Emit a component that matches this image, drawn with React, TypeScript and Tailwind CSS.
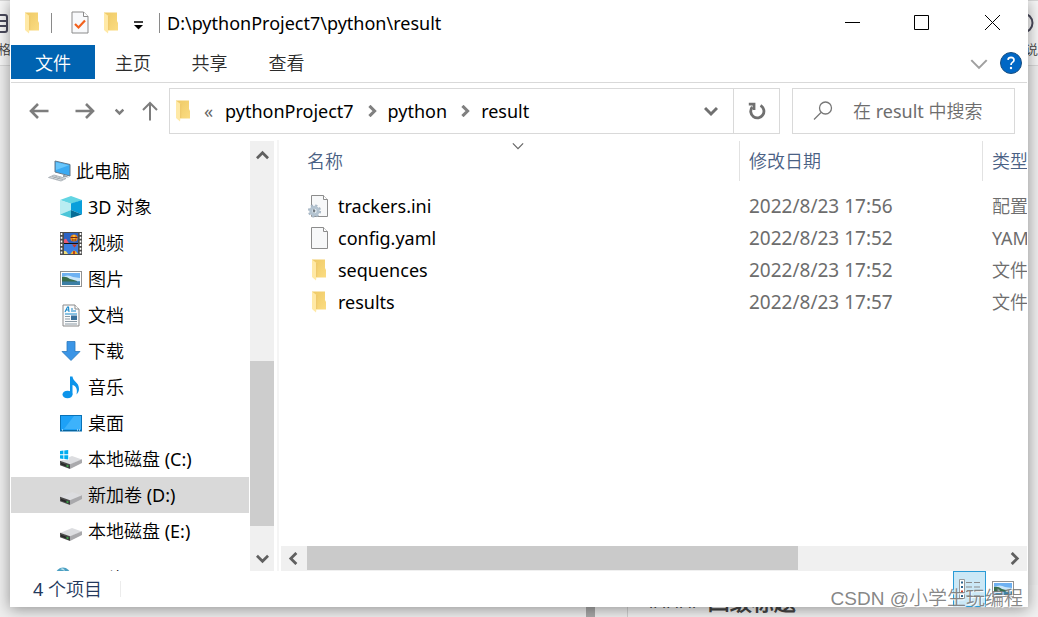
import React from "react";

type IconProps = { className?: string };

function FolderIcon({ className = "" }: IconProps) {
  return (
    <svg className={className} width="14" height="22" viewBox="0 0 14 22" aria-hidden="true">
      <defs>
        <linearGradient id="folderBack" x1="0" x2="1" y1="0" y2="1">
          <stop offset="0" stopColor="#eec965" />
          <stop offset="1" stopColor="#fbdc82" />
        </linearGradient>
      </defs>
      <path d="M0 0.5H13V9L14 11V18.5H2Z" fill="url(#folderBack)" />
      <path d="M0 0.5L4.5 4V17.5L4 21.5L0 18Z" fill="#ffe9a6" />
      <path d="M4.6 4V18" stroke="#e9bf5c" strokeWidth="0.7" />
    </svg>
  );
}

function CheckPageIcon() {
  return (
    <svg width="18" height="23" viewBox="0 0 18 23" aria-hidden="true">
      <path d="M1 1H12.5L17 5.5V22H1Z" fill="#f8f9fb" stroke="#8b8b8b" />
      <path d="M12.5 1V5.5H17" fill="#fff" stroke="#8b8b8b" />
      <path d="M4 13L7.5 16.5L14 9.5" fill="none" stroke="#f2611c" strokeWidth="2.2" />
    </svg>
  );
}

function PageIcon({ gear = false }: { gear?: boolean }) {
  return (
    <svg width="22" height="24" viewBox="0 0 22 24" aria-hidden="true">
      <path d="M3.5 1.5H15.5L19.5 5.5V22.5H3.5Z" fill="#f7f8f9" stroke="#8c8c8c" />
      <path d="M15.5 1.5V5.5H19.5" fill="#fff" stroke="#8c8c8c" />
      {gear && (
        <g>
          <circle cx="6.5" cy="17" r="5.4" fill="none" stroke="#a9b8c6" strokeWidth="2.4" strokeDasharray="2.2 2.04" />
          <circle cx="6.5" cy="17" r="3.7" fill="#e4edf4" stroke="#b3c3d0" strokeWidth="3" />
          <path d="M5 15.5Q7 14.5 7.5 17L6 19Q4.5 17.5 5 15.5Z" fill="#6f7880" />
        </g>
      )}
    </svg>
  );
}

function ComputerIcon() {
  return (
    <svg width="24" height="22" viewBox="0 0 24 22" aria-hidden="true">
      <path d="M7 1L22 4.5V16L7 12Z" fill="#3baaf2" stroke="#66798a" strokeWidth="1" />
      <path d="M8 2.2L21 5.3L8 10Z" fill="#69c6fb" />
      <path d="M15 14.5L18 15.5L21 17.5L15 17Z" fill="#9ca5ad" />
      <path d="M6 15L18 18.5L13 21L0.5 17.5Z" fill="#d5d9dc" stroke="#a2aab0" strokeWidth="0.8" />
      <path d="M4 16.5L15 19.5M9 16L5 18.7M12.5 17L8.5 19.7" stroke="#8f989f" strokeWidth="0.6" />
    </svg>
  );
}

function CubeIcon() {
  return (
    <svg width="22" height="22" viewBox="0 0 22 22" aria-hidden="true">
      <path d="M0 4L11 0L22 4L11 8Z" fill="#63d5e3" />
      <path d="M0 4L11 7.5V14L0 18.5Z" fill="#b9edf2" />
      <path d="M22 4L11 7.5V14L22 18.5Z" fill="#0a9fdb" />
      <path d="M0 18.5L11 14V22Z" fill="#4ac5d8" />
      <path d="M22 18.5L11 14V22Z" fill="#066d96" />
    </svg>
  );
}

function VideoIcon() {
  return (
    <svg width="22" height="23" viewBox="0 0 22 23" aria-hidden="true">
      <rect width="22" height="23" fill="#4c4c4c" />
      <rect x="4" y="1" width="14" height="10" fill="#2b62c4" />
      <rect x="4" y="12" width="14" height="10" fill="#3d7ee0" />
      <path d="M1.5 1V23M20.5 1V23" stroke="#fff" strokeWidth="1.6" strokeDasharray="2 1.7" />
      <path d="M4 8Q6 5 7.5 9L9 11H4Z" fill="#e55a75" />
      <circle cx="14" cy="6" r="3.6" fill="#e8841f" />
      <path d="M13.3 3H14.7V9H13.3Z" fill="#ffd137" />
      <path d="M10.5 5.5H17.5M12 8H16" stroke="#702818" />
      <path d="M12 12.5H17L14.5 15.5Z" fill="#ce3824" />
      <path d="M10.5 22Q14 15 18 22Z" fill="#efb82b" />
      <path d="M13 22V19H15V22Z" fill="#c24019" />
      <path d="M4 19Q6 18 8 22H4Z" fill="#eddc78" />
      <path d="M4 11.5H18" stroke="#111" />
    </svg>
  );
}

function PictureIcon() {
  return (
    <svg width="22" height="16" viewBox="0 0 22 16" aria-hidden="true">
      <rect x="0.5" y="0.5" width="21" height="15" fill="#fff" stroke="#929292" />
      <rect x="2" y="2" width="18" height="12" fill="#6eb1f2" />
      <path d="M2 6Q8 3 13 6L20 7V10H2Z" fill="#c9e6fa" />
      <path d="M2 6Q6 5 10 8Q14 9 17 10V11H2Z" fill="#386d4c" />
      <path d="M2 10.5H20V14H2Z" fill="#3c7fa6" />
    </svg>
  );
}

function DocumentIcon() {
  return (
    <svg width="18" height="23" viewBox="0 0 18 23" aria-hidden="true">
      <path d="M1 1H13L17 5V22H1Z" fill="#fafbfc" stroke="#8b8b8b" />
      <path d="M13 1V5H17" fill="#fff" stroke="#8b8b8b" />
      <path d="M3 8L5.5 3H6.5L7 8M4 6H7M9 5H11M9 7H14" fill="none" stroke="#1688c9" strokeWidth="1.1" />
      <path d="M3 10H15" stroke="#1688c9" />
      <path d="M3 12.5H8M3 15H8M3 17.5H15M3 20H15" stroke="#8d9ba5" />
      <rect x="9" y="11.5" width="6" height="4.5" fill="#38709b" />
    </svg>
  );
}

function DownloadIcon() {
  return (
    <svg width="20" height="20" viewBox="0 0 20 20" aria-hidden="true">
      <path d="M6 0.5H14V10.5H19L10 19.5L1 10.5H6Z" fill="#3b95e6" stroke="#2b78bd" strokeWidth="0.8" />
    </svg>
  );
}

function MusicIcon() {
  return (
    <svg width="18" height="23" viewBox="0 0 18 23" aria-hidden="true">
      <ellipse cx="5.5" cy="18.5" rx="5" ry="3.8" fill="#0d94ea" />
      <path d="M8 0.5H10.5C11 6 17 6 17 13C17 15 16 17 14.5 18.5C16 12 13 9.5 10.5 9V18.5H8Z" fill="#0d94ea" />
    </svg>
  );
}

function DesktopIcon() {
  return (
    <svg width="22" height="17" viewBox="0 0 22 17" aria-hidden="true">
      <rect x="0.5" y="0.5" width="21" height="15.5" fill="#1da1f7" stroke="#0872b8" />
      <path d="M14 1H21V14H4Z" fill="#3db2fb" />
      <path d="M1 15.5H21" stroke="#07659f" />
      <path d="M2 15H3M17 15H18M19 15H20" stroke="#fff" />
    </svg>
  );
}

function DriveIcon({ windows = false }: { windows?: boolean }) {
  return (
    <svg width="22" height="22" viewBox="0 0 22 22" aria-hidden="true">
      <path d="M0 13L12 8L22 11.5L10 16.5Z" fill="#dcdde0" />
      <path d="M10 16.3L22 11.3V15L10 21Z" fill="#a9a9ac" />
      <path d="M0 12.8L10 16.3V21L0 17.2Z" fill="#4a4a4a" />
      <path d="M1 14.8L9.5 17.9V19.8L1 16.6Z" fill="#262626" />
      <path d="M6.5 17.6L8.5 18.4" stroke="#42c452" strokeWidth="1.5" />
      {windows && (
        <g>
          <path d="M0 2H9V12H0Z" fill="#fff" />
          <path d="M0 3L3.4 2.6V6.3H0ZM4.3 2.5L8.2 2V6.3H4.3ZM0 7.2H3.4V11L0 10.6ZM4.3 7.2H8.2V11.5L4.3 11Z" fill="#00adef" />
        </g>
      )}
    </svg>
  );
}

function NetworkIcon() {
  return (
    <svg width="22" height="20" viewBox="0 0 22 20" aria-hidden="true">
      <circle cx="8" cy="8" r="7.5" fill="#4b9fc2" />
      <path d="M5 2Q9 0 10 4Z" fill="#b9e2ee" />
    </svg>
  );
}

type ChevronProps = { dir: "up" | "down" | "left" | "right"; size?: number; stroke?: number };

const chevronPaths = {
  up: "M1 10L7 4L13 10",
  down: "M1 4L7 10L13 4",
  left: "M9 1L3 7L9 13",
  right: "M4 1L10 7L4 13",
};

function Chevron({ dir, size = 14, stroke = 2.5 }: ChevronProps) {
  return (
    <svg width={size} height={size} viewBox="0 0 14 14" fill="none" stroke="currentColor" strokeWidth={stroke} aria-hidden="true">
      <path d={chevronPaths[dir]} />
    </svg>
  );
}

const treeItems = [
  { label: "3D 对象", icon: <CubeIcon /> },
  { label: "视频", icon: <VideoIcon /> },
  { label: "图片", icon: <PictureIcon /> },
  { label: "文档", icon: <DocumentIcon /> },
  { label: "下载", icon: <DownloadIcon /> },
  { label: "音乐", icon: <MusicIcon /> },
  { label: "桌面", icon: <DesktopIcon /> },
  { label: "本地磁盘 (C:)", icon: <DriveIcon windows /> },
  { label: "新加卷 (D:)", icon: <DriveIcon />, selected: true },
  { label: "本地磁盘 (E:)", icon: <DriveIcon /> },
];

const files = [
  { name: "trackers.ini", date: "2022/8/23 17:56", type: "配置设置", icon: <PageIcon gear /> },
  { name: "config.yaml", date: "2022/8/23 17:52", type: "YAML 文件", icon: <PageIcon /> },
  { name: "sequences", date: "2022/8/23 17:52", type: "文件夹", icon: <FolderIcon className="ml-1" /> },
  { name: "results", date: "2022/8/23 17:57", type: "文件夹", icon: <FolderIcon className="ml-1" /> },
];

function Backdrop() {
  return (
    <div className="absolute inset-0 overflow-hidden bg-[#eeeeee] text-[#444]" aria-hidden="true">
      <div className="h-[66px] border-y border-[#d8d8d8] bg-[#f6f6f6]" />
      <svg className="absolute left-0 top-3.5" width="9" height="20" viewBox="0 0 9 20" fill="none" stroke="#4a4a5c" strokeWidth="2">
        <path d="M-3 1H5Q7 1 7 3V16Q7 18 5 18H-3M0 7H7M0 12H7" />
      </svg>
      <span className="absolute -left-0.5 top-10 text-[13px] leading-[18px]">格</span>
      <svg className="absolute right-1 top-3" width="22" height="22" viewBox="0 0 22 22" fill="none" stroke="#4a4a5c" strokeWidth="2">
        <circle cx="11" cy="11" r="9.5" />
      </svg>
      <span className="absolute right-0 top-10 text-[13px] leading-[18px]">说</span>
      <div className="absolute bottom-0 left-[586px] h-3 w-[9px] bg-[#a8a8a8]" />
      <div className="absolute bottom-0 left-[627px] right-0 flex h-8 items-center border-l border-[#d0d0d0] bg-[#f1f1f1] pl-5 text-[22px] leading-8">
        <span className="mr-2 text-xl leading-8">####</span>
        <span className="font-bold">四级标题</span>
      </div>
    </div>
  );
}

function TitleBar() {
  return (
    <header className="flex h-[45px] shrink-0 items-center pl-[14px]">
      <FolderIcon />
      <span className="ml-3 h-5 w-px bg-[#8a8a8a]" />
      <button className="ml-[19px]" aria-label="属性"><CheckPageIcon /></button>
      <button className="ml-[15px]" aria-label="新建文件夹"><FolderIcon /></button>
      <button className="ml-4 mt-1.5" aria-label="自定义快速访问工具栏">
        <svg width="9" height="9" viewBox="0 0 9 9"><path d="M0 1H9" stroke="#000" strokeWidth="1.5" /><path d="M0 4H9L4.5 8.5Z" /></svg>
      </button>
      <span className="ml-4 h-5 w-px bg-[#8a8a8a]" />
      <h1 className="ml-[7px] whitespace-nowrap text-lg leading-6 text-black">D:\pythonProject7\python\result</h1>
      <div className="ml-auto flex">
        <button className="flex h-11 w-[70px] items-center justify-center" aria-label="最小化">
          <svg width="15" height="15" viewBox="0 0 15 15"><path d="M0 7.5H15" stroke="#000" /></svg>
        </button>
        <button className="flex h-11 w-[70px] items-center justify-center" aria-label="最大化">
          <svg width="16" height="15" viewBox="0 0 16 15"><path d="M0.5 0.5H14.5V14.5H0.5Z" fill="none" stroke="#000" /></svg>
        </button>
        <button className="flex h-11 w-[70px] items-center justify-center" aria-label="关闭">
          <svg width="15" height="15" viewBox="0 0 15 15"><path d="M0 0L15 15M15 0L0 15" stroke="#000" /></svg>
        </button>
      </div>
    </header>
  );
}

function Ribbon() {
  return (
    <nav className="flex h-[38px] shrink-0 items-start border-b border-[#d9d9d9] leading-9 text-[#2b2b2b]">
      <button className="h-[34px] w-[84px] bg-[#0063b1] text-white">文件</button>
      <button className="w-[76px]">主页</button>
      <button className="w-[77px]">共享</button>
      <button className="w-[77px]">查看</button>
      <button className="ml-auto mt-2.5 text-[#a0a0a0]" aria-label="展开功能区">
        <Chevron dir="down" size={18} stroke={1.6} />
      </button>
      <button className="ml-3 mr-[5px] mt-[7px]" aria-label="帮助">
        <svg width="22" height="22" viewBox="0 0 22 22">
          <circle cx="11" cy="11" r="10.5" fill="#0067c5" stroke="#184f82" />
          <path d="M8 7.8Q8.3 5.4 11 5.4Q14 5.5 14 8Q14 9.4 12.4 10.4Q11 11.3 11 13" fill="none" stroke="#fff" strokeWidth="1.7" />
          <circle cx="11" cy="16" r="1.2" fill="#fff" />
        </svg>
      </button>
    </nav>
  );
}

function AddressRow() {
  return (
    <div className="flex h-[57px] shrink-0 items-start pt-[5px]">
      <div className="flex h-[46px] w-[158px] shrink-0 items-center pl-[18px] text-[#7d7d7d]">
        <button aria-label="后退">
          <svg width="20" height="16" viewBox="0 0 20 16" fill="none" stroke="currentColor" strokeWidth="2.6"><path d="M19.5 8H2M9 1L2 8L9 15" /></svg>
        </button>
        <button className="ml-[26px]" aria-label="前进">
          <svg width="20" height="16" viewBox="0 0 20 16" fill="none" stroke="currentColor" strokeWidth="2.6"><path d="M0.5 8H18M11 1L18 8L11 15" /></svg>
        </button>
        <button className="ml-5" aria-label="最近浏览的位置"><Chevron dir="down" size={9} stroke={3.8} /></button>
        <button className="ml-[18px]" aria-label="向上">
          <svg width="16" height="20" viewBox="0 0 16 20" fill="none" stroke="currentColor" strokeWidth="2"><path d="M8 19.5V2M1 9L8 2L15 9" /></svg>
        </button>
      </div>
      <div className="flex h-[46px] min-w-0 flex-1 items-center border border-[#d9d9d9] text-black">
        <FolderIcon className="ml-1.5 shrink-0" />
        <span className="ml-3.5 w-3 text-[#666]">«</span>
        <button className="ml-[9px]">pythonProject7</button>
        <span className="ml-3 mr-2.5 text-[#808080]"><Chevron dir="right" size={12} stroke={3.6} /></span>
        <button>python</button>
        <span className="ml-3 mr-2.5 text-[#808080]"><Chevron dir="right" size={12} stroke={3.6} /></span>
        <button>result</button>
        <button className="ml-auto mr-[15px] text-[#707070]" aria-label="以前的位置"><Chevron dir="down" size={14} stroke={3} /></button>
        <button className="flex h-full w-[46px] items-center justify-center border-l border-[#d9d9d9]" aria-label="刷新">
          <svg width="18" height="18" viewBox="0 0 18 18" fill="none" stroke="#707070" strokeWidth="2.8">
            <path d="M12.5 3.5A6.6 6.6 0 1 1 4.3 5" /><path d="M0.8 2.2H6V8" />
          </svg>
        </button>
      </div>
      <label className="ml-3 mr-3 flex h-[46px] w-[223px] shrink-0 items-center border border-[#d9d9d9] pl-5">
        <svg className="shrink-0" width="20" height="20" viewBox="0 0 20 20" fill="none" stroke="#777" strokeWidth="1.3" aria-hidden="true">
          <circle cx="12.5" cy="7" r="6" /><path d="M8 11.5L1 18.5" />
        </svg>
        <input className="ml-5 w-full min-w-0 bg-transparent outline-none placeholder:text-[#6d6d6d]" placeholder="在 result 中搜索" aria-label="搜索" />
      </label>
    </div>
  );
}

function Sidebar() {
  return (
    <aside className="relative w-[239px] shrink-0 overflow-hidden text-black">
      <div className="absolute inset-x-0 top-[13px]">
        <a href="#pc" className="flex h-9 items-center pl-[37px]"><ComputerIcon /><span className="ml-1">此电脑</span></a>
        <ul>
          {treeItems.map((item) => (
            <li key={item.label} className={item.selected ? "mr-px bg-[#d9d9d9]" : "mr-px"}>
              <a href="#item" className="flex h-9 items-center pl-[49px]">
                <span className="flex w-[22px] justify-center">{item.icon}</span>
                <span className="ml-1.5">{item.label}</span>
              </a>
            </li>
          ))}
        </ul>
        <a href="#network" className="flex items-start pl-11 pt-[18px]"><NetworkIcon /><span className="ml-3">网络</span></a>
      </div>
    </aside>
  );
}

function VerticalScrollbar() {
  return (
    <div className="mr-[3px] mt-px flex w-6 shrink-0 flex-col bg-[#f0f0f0] text-[#606060]">
      <button className="flex h-7 shrink-0 items-center justify-center" aria-label="向上滚动"><Chevron dir="up" size={13} stroke={3} /></button>
      <div className="flex-[192]" />
      <div className="flex-[165] bg-[#cdcdcd]" />
      <div className="flex-[20]" />
      <button className="flex h-[25px] shrink-0 items-center justify-center" aria-label="向下滚动"><Chevron dir="down" size={13} stroke={3} /></button>
    </div>
  );
}

function FileList() {
  return (
    <main className="flex min-w-0 flex-1 flex-col border-l-2 border-[#f5f5f5] pl-0.5">
      <div className="relative min-h-0 flex-1 overflow-hidden pt-px">
        <span className="absolute left-[231px] top-0 leading-none text-[#666]"><Chevron dir="down" size={12} stroke={1.4} /></span>
        <table className="w-[900px] table-fixed border-collapse text-left">
          <thead className="text-[#4a6184]">
            <tr>
              <th className="w-[458px] p-0 pb-[9px] font-normal"><div className="h-10 pl-[26px] leading-10">名称</div></th>
              <th className="w-[243px] p-0 pb-[9px] font-normal"><div className="h-10 border-l border-[#e2e2e2] pl-[9px] leading-10">修改日期</div></th>
              <th className="p-0 pb-[9px] font-normal"><div className="h-10 border-l border-[#e2e2e2] pl-[9px] leading-10">类型</div></th>
            </tr>
          </thead>
          <tbody>
            {files.map((file) => (
              <tr key={file.name} className="h-8 text-[#6d6d6d]">
                <td className="p-0">
                  <div className="flex items-center pl-[27px] text-black">
                    <span className="w-[30px]">{file.icon}</span>{file.name}
                  </div>
                </td>
                <td className="p-0 pl-2.5 text-[19px]">{file.date}</td>
                <td className="whitespace-nowrap p-0 pl-2.5">{file.type}</td>
              </tr>
            ))}
          </tbody>
        </table>
      </div>
      <div className="flex h-[25px] shrink-0 bg-[#f0f0f0] text-[#606060]">
        <button className="flex w-[26px] shrink-0 items-center justify-center" aria-label="向左滚动"><Chevron dir="left" size={13} stroke={3} /></button>
        <div className="mb-px flex-[491] bg-[#cacaca]" />
        <div className="flex-[203]" />
        <button className="flex w-[26px] shrink-0 items-center justify-center" aria-label="向右滚动"><Chevron dir="right" size={13} stroke={3} /></button>
      </div>
    </main>
  );
}

function StatusBar() {
  return (
    <footer className="flex h-9 shrink-0 items-center pl-[22px] text-[#24395c]">
      <span>4 个项目</span>
      <span className="ml-[18px] h-4 w-px bg-[#ececec]" />
      <button className="ml-auto flex h-full w-[33px] items-center justify-center border border-[#2a9bd6] bg-[#cbe8f6]" aria-label="详细信息">
        <svg width="22" height="20" viewBox="0 0 22 20">
          <path d="M0.5 0.5H5.5V19.5H0.5Z" fill="#fff" stroke="#999" />
          <path d="M2 3.5H4M2 8H4M2 17H4" stroke="#2d648e" strokeWidth="2" />
          <path d="M2 12.5H4" stroke="#d03a25" strokeWidth="2" />
          <path d="M7 3.5H13M15 3.5H21M7 8H13M15 8H21M7 12.5H13M15 12.5H21M7 17H13M15 17H21" stroke="#8b8b8b" />
        </svg>
      </button>
      <button className="ml-1.5 mr-[13px]" aria-label="大图标"><PictureIcon /></button>
    </footer>
  );
}

export default function App() {
  return (
    <div className="relative flex h-screen overflow-hidden px-2.5 pb-2.5 font-['Noto_Sans','Noto_Sans_CJK_SC_DemiLight','Noto_Sans_CJK_SC',sans-serif] text-lg leading-6">
      <Backdrop />
      <div className="relative flex min-w-0 flex-1 flex-col bg-white px-px shadow-[0_2px_14px_rgba(0,0,0,0.4)]">
        <TitleBar />
        <Ribbon />
        <AddressRow />
        <div className="flex min-h-0 flex-1">
          <Sidebar />
          <VerticalScrollbar />
          <FileList />
        </div>
        <StatusBar />
      </div>
      <div className="pointer-events-none absolute bottom-1.5 right-[15px] font-['Liberation_Sans','Noto_Sans_CJK_SC_DemiLight','Noto_Sans_CJK_SC',sans-serif] text-[19px] text-[#777]/90 [text-shadow:1px_1px_1px_#ffffff]">
        CSDN @小学生玩编程
      </div>
    </div>
  );
}
